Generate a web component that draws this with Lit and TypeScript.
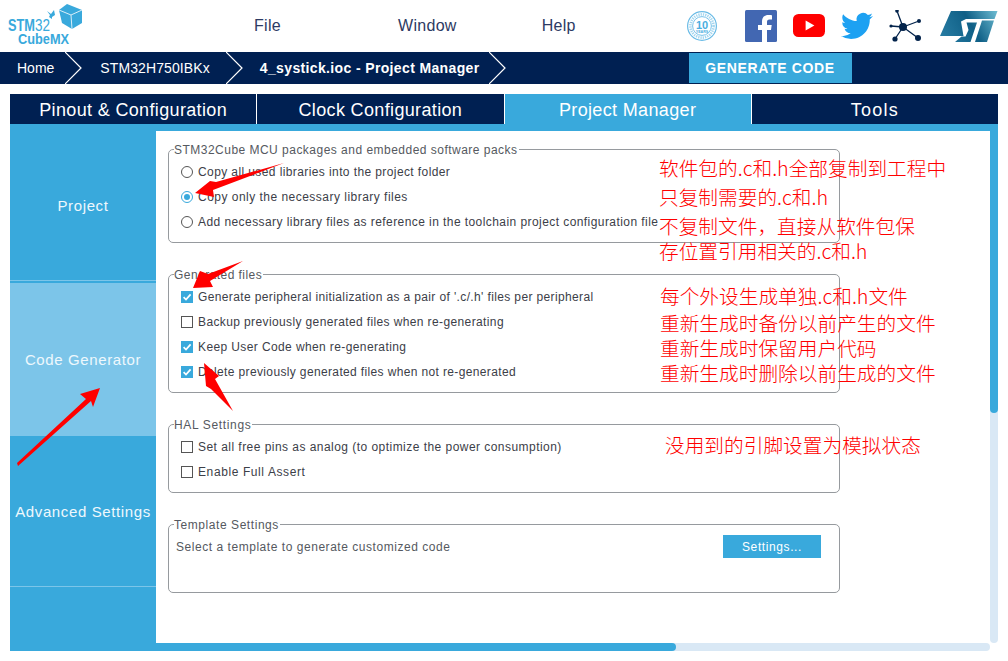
import { LitElement, html, css, svg } from "lit";
import { customElement } from "lit/decorators.js";

const notes: [string, number, number][] = [
  ["软件包的.c和.h全部复制到工程中", 659, 168],
  ["只复制需要的.c和.h", 659, 197],
  ["不复制文件\uFF0C直接从软件包保", 659, 226],
  ["存位置引用相关的.c和.h", 659, 251],
  ["每个外设生成单独.c和.h文件", 660, 296],
  ["重新生成时备份以前产生的文件", 660, 323],
  ["重新生成时保留用户代码", 660, 348],
  ["重新生成时删除以前生成的文件", 660, 373],
  ["没用到的引脚设置为模拟状态", 665, 445],
];

const check = svg`<svg class="tick" viewBox="0 0 12 12"><path d="M2.6 6.2 5 8.6 9.6 3.4" fill="none" stroke="#fff" stroke-width="1.7"/></svg>`;

@customElement("app-root")
export class AppRoot extends LitElement {
  static styles = css`
    :host {
      display: block;
      position: relative;
      width: 1008px;
      height: 661px;
      overflow: hidden;
      background: #fff;
      font-family: "Liberation Sans", Arial, sans-serif;
    }
    .top { display: flex; align-items: center; height: 52px; color: #2d3a63; font-size: 16px; }
    .logo { width: 90px; height: 52px; flex: none; display: block; }
    .menu { letter-spacing: .3px; }
    .file { margin-left: 164px; }
    .window { margin-left: 117px; }
    .help { margin-left: 85px; }
    .icons { display: flex; align-items: center; margin-left: 111px; }
    .icons svg { display: block; flex: none; }
    .crumbs { display: flex; height: 32px; background: #002052; color: #fff; font-size: 14px; position: relative; }
    .crumb { display: flex; align-items: center; flex: none; height: 32px; }
    .crumb svg { display: block; flex: none; }
    .home { margin-left: 17px; }
    .device { letter-spacing: .1px; }
    .bold { font-weight: 700; letter-spacing: .36px; }
    .gen {
      margin-left: 182px; margin-top: 1px; width: 163px; height: 30px; background: #39a9dc;
      display: flex; align-items: center; justify-content: center;
      font-weight: 700; font-size: 14px; letter-spacing: .65px;
    }
    .app { margin: 10px 10px 0; width: 988px; }
    .tabs { display: flex; gap: 1px; height: 30px; }
    .tab {
      flex: 1 1 0; background: #002052; color: #fff; font-size: 18px; letter-spacing: .35px; padding-top: 2px; box-sizing: border-box;
      display: flex; align-items: center; justify-content: center;
    }
    .tab.on { background: #39a9dc; }
    .tab.wide { letter-spacing: 1.2px; }
    .strip { height: 7px; background: #39a9dc; }
    .body { display: flex; height: 512px; }
    .side { width: 146px; flex: none; background: #39a9dc; color: #eef8fd; font-size: 15px; letter-spacing: .62px; }
    .item { display: flex; align-items: center; justify-content: center; white-space: nowrap; }
    .i1 { height: 149px; border-bottom: 1px solid #7cc5e9; }
    .i2 { height: 153px; margin-top: 2px; background: #7cc5e9; }
    .i3 { height: 150px; border-bottom: 1px solid #7cc5e9; }
    .main { flex: 1; padding: 11px 0 0 12px; color: #3c4048; font-size: 12px; letter-spacing: .4px; }
    .vbar { width: 8px; flex: none; margin-top: -7px; background: #d9e8f5; border-radius: 0 0 4px 4px; }
    .vthumb { height: 289px; background: #39a9dc; border-radius: 0 0 4px 4px; }
    .hbar { height: 8px; display: flex; }
    .hleft { width: 146px; background: #39a9dc; flex: none; }
    .htrack { width: 834px; background: #d9e8f5; border-radius: 0 4px 4px 0; }
    .hthumb { width: 520px; height: 8px; background: #39a9dc; border-radius: 0 4px 4px 0; }
    fieldset {
      box-sizing: border-box; width: 672px; margin: 0 0 24px; padding: 3px 0 0 12px;
      border: 1px solid #969a9e; border-radius: 5px; min-inline-size: 0;
    }
    legend { padding: 0 1px 0 0; margin-left: -7px; height: 14px; line-height: 16px; color: #555960; }
    .row { display: flex; align-items: center; height: 25px; gap: 5px; white-space: nowrap; }
    .lb { padding-top: 1px; }
    .g1 { height: 101px; }
    .g2 { height: 126px; }
    .g3 { height: 76px; }
    .g4 { height: 76px; padding-left: 7px; }
    .g4 legend { margin-left: -2px; }
    .box { box-sizing: border-box; width: 12px; height: 12px; flex: none; border: 1px solid #555; background: #fff; }
    .box.on { border: 0; background: #39a9dc; }
    .tick { display: block; width: 12px; height: 12px; }
    .radio { box-sizing: border-box; width: 12px; height: 12px; flex: none; border: 1px solid #555; border-radius: 50%; background: #fff; }
    .radio.on { border-color: #39a9dc; display: flex; align-items: center; justify-content: center; }
    .dot { width: 6px; height: 6px; border-radius: 50%; background: #39a9dc; }
    .tpl { display: flex; align-items: center; height: 23px; margin-top: 1px; color: #555960; }
    .tpl span { flex: none; width: 547px; letter-spacing: .54px; }
    .btn {
      width: 98px; height: 23px; background: #39a9dc; color: #fff; display: flex;
      align-items: center; justify-content: center; flex: none; letter-spacing: .6px;
    }
    .arrows { position: absolute; left: 0; top: 0; width: 1008px; height: 661px; pointer-events: none; }
    .note {
      position: absolute; transform: translateY(-50%); color: #ff0000; font-size: 19.7px; line-height: 24px;
      white-space: nowrap; font-family: "Noto Sans CJK SC", "Liberation Sans", sans-serif; font-weight: 300;
    }
  `;

  private box(on: boolean, label: string, ls: number) {
    return html`<div class="row"><div class="box ${on ? "on" : ""}">${on ? check : ""}</div><span class="lb" style="letter-spacing:${ls}px">${label}</span></div>`;
  }
  private radio(on: boolean, label: string, ls: number) {
    return html`<div class="row"><div class="radio ${on ? "on" : ""}">${on ? html`<div class="dot"></div>` : ""}</div><span class="lb" style="letter-spacing:${ls}px">${label}</span></div>`;
  }
  private legend(label: string, ls: number) {
    return html`<legend style="letter-spacing:${ls}px">${label}</legend>`;
  }
  private chevron() {
    return html`<svg width="18" height="32" viewBox="0 0 18 32"><path d="M0 0 16 16 0 32" fill="none" stroke="#fff" stroke-width="1.2"/></svg>`;
  }

  render() {
    return html`
      <div class="top">
        <svg class="logo" viewBox="0 0 90 52">
          <path d="M67 4 82 10V23L72 29 62 23 59 10Z" fill="#39a9dc"/>
          <path d="M59 10 71 15 82 10M71 15 72 29" fill="none" stroke="#d8eef9" stroke-width="1"/>
          <path d="M47 11 51 14 54 10 55 15 52 17 52 19 49 17 50 15Z" fill="#39a9dc"/>
          <text x="8" y="31" font-family="Liberation Sans" font-size="17" font-weight="700" fill="#39a9dc" textLength="27" lengthAdjust="spacingAndGlyphs">STM</text>
          <text x="35" y="31" font-family="Liberation Sans" font-size="17" fill="#39a9dc" textLength="15" lengthAdjust="spacingAndGlyphs">32</text>
          <text x="18" y="43.5" font-family="Liberation Sans" font-size="15.5" font-weight="700" fill="#39a9dc" textLength="51" lengthAdjust="spacingAndGlyphs">CubeMX</text>
        </svg>
        <span class="menu file">File</span>
        <span class="menu window">Window</span>
        <span class="menu help">Help</span>
        <div class="icons">
          <svg width="30" height="32" viewBox="0 0 30 32">
            <circle cx="15" cy="16" r="14.4" fill="none" stroke="#6abbe6" stroke-width="1.2"/>
            <circle cx="15" cy="16" r="11.6" fill="none" stroke="#a5d6ef" stroke-width="2.6" stroke-dasharray="1.3 1"/>
            <circle cx="15" cy="16" r="9.4" fill="none" stroke="#6abbe6" stroke-width=".9"/>
            <text x="15" y="18.5" text-anchor="middle" font-family="Liberation Sans" font-size="11" font-weight="700" fill="#4aaee0">10</text>
            <text x="15" y="22.5" text-anchor="middle" font-family="Liberation Sans" font-size="3.6" font-weight="700" fill="#4aaee0">YEARS</text>
          </svg>
          <svg style="margin-left:28px" width="32" height="32" viewBox="0 0 32 32">
            <rect width="32" height="32" rx="1.5" fill="#4267b2"/>
            <path d="M22 32V20h4l.7-5H22v-3c0-1.4.5-2.4 2.5-2.4H27V5.2C26.5 5.1 25 5 23.3 5 19.7 5 17 7.2 17 11.4V15h-4v5h4v12z" fill="#fff"/>
          </svg>
          <svg style="margin-left:16px" width="32" height="32" viewBox="0 0 32 32">
            <rect x="0" y="4" width="32" height="23" rx="5.5" fill="#ff0000"/>
            <path d="M12.6 10.6 21.4 15.5 12.6 20.4Z" fill="#fff"/>
          </svg>
          <svg style="margin-left:16px" width="32" height="32" viewBox="0 0 24 24">
            <path d="M23.953 4.57a10 10 0 01-2.825.775 4.958 4.958 0 002.163-2.723c-.951.555-2.005.959-3.127 1.184a4.92 4.92 0 00-8.384 4.482C7.69 8.095 4.067 6.13 1.64 3.162a4.822 4.822 0 00-.666 2.475c0 1.71.87 3.213 2.188 4.096a4.904 4.904 0 01-2.228-.616v.06a4.923 4.923 0 003.946 4.827 4.996 4.996 0 01-2.212.085 4.936 4.936 0 004.604 3.417 9.867 9.867 0 01-6.102 2.105c-.39 0-.779-.023-1.17-.067a13.995 13.995 0 007.557 2.209c9.053 0 13.998-7.496 13.998-13.985 0-.21 0-.42-.015-.63A9.935 9.935 0 0024 4.59z" fill="#1da1f2"/>
          </svg>
          <svg style="margin-left:16px" width="32" height="32" viewBox="889 10 32 32">
            <g stroke="#03234b" stroke-width="1.3">
              <path d="M903 27 897 11M903 27 919 21M903 27 918 38M903 27 895 39M903 27 891 26"/>
            </g>
            <g fill="#03234b">
              <circle cx="903" cy="27" r="4"/><circle cx="897" cy="11" r="1.8"/><circle cx="919" cy="21" r="2"/>
              <circle cx="918" cy="38" r="3"/><circle cx="895" cy="39" r="2.6"/><circle cx="891" cy="26" r="1.6"/>
            </g>
          </svg>
          <svg style="margin-left:19px" width="58" height="32" viewBox="940 10 58 32">
            <defs>
              <linearGradient id="st" gradientUnits="userSpaceOnUse" x1="940" y1="42" x2="997" y2="11">
                <stop offset="0" stop-color="#2a7fa6"/><stop offset=".55" stop-color="#0f5f86"/><stop offset="1" stop-color="#6dbcd2"/>
              </linearGradient>
            </defs>
            <path fill="url(#st)" d="M951 11H997.500L994.500 19H966L961 21.500 963.500 36H940Z"/>
            <path fill="url(#st)" d="M966.500 22.500H977L970.500 42H955L961.500 36.500H965.500L968.500 30Z"/>
            <path fill="url(#st)" d="M982 20.500H994L987 42H975Z"/>
          </svg>
        </div>
      </div>

      <div class="crumbs">
        <div class="crumb home">Home</div>
        <div class="crumb" style="margin-left:11px">${this.chevron()}</div>
        <div class="crumb device" style="margin-left:17px">STM32H750IBKx</div>
        <div class="crumb" style="margin-left:16px">${this.chevron()}</div>
        <div class="crumb bold" style="margin-left:16px">4_systick.ioc - Project Manager</div>
        <div class="crumb" style="margin-left:9px">${this.chevron()}</div>
        <div class="gen">GENERATE CODE</div>
      </div>

      <div class="app">
        <div class="tabs">
          <div class="tab">Pinout &amp; Configuration</div>
          <div class="tab">Clock Configuration</div>
          <div class="tab on">Project Manager</div>
          <div class="tab wide">Tools</div>
        </div>
        <div class="strip"></div>
        <div class="body">
          <div class="side">
            <div class="item i1">Project</div>
            <div class="item i2">Code Generator</div>
            <div class="item i3">Advanced Settings</div>
          </div>
          <div class="main">
            <fieldset class="g1">
              ${this.legend("STM32Cube MCU packages and embedded software packs", 0.48)}
              ${this.radio(false, "Copy all used libraries into the project folder", 0.4)}
              ${this.radio(true, "Copy only the necessary library files", 0.48)}
              ${this.radio(false, "Add necessary library files as reference in the toolchain project configuration file", 0.43)}
            </fieldset>
            <fieldset class="g2">
              ${this.legend("Generated files", 0.45)}
              ${this.box(true, "Generate peripheral initialization as a pair of '.c/.h' files per peripheral", 0.37)}
              ${this.box(false, "Backup previously generated files when re-generating", 0.38)}
              ${this.box(true, "Keep User Code when re-generating", 0.39)}
              ${this.box(true, "Delete previously generated files when not re-generated", 0.36)}
            </fieldset>
            <fieldset class="g3">
              ${this.legend("HAL Settings", 0.65)}
              ${this.box(false, "Set all free pins as analog (to optimize the power consumption)", 0.46)}
              ${this.box(false, "Enable Full Assert", 0.6)}
            </fieldset>
            <fieldset class="g4">
              ${this.legend("Template Settings", 0.56)}
              <div class="tpl"><span>Select a template to generate customized code</span><div class="btn">Settings...</div></div>
            </fieldset>
          </div>
          <div class="vbar"><div class="vthumb"></div></div>
        </div>
        <div class="hbar"><div class="hleft"></div><div class="htrack"><div class="hthumb"></div></div></div>
      </div>

      <svg class="arrows" viewBox="0 0 1008 661">
        <g fill="#ff0000">
          <path d="M284 163 216 182 210 181 195 193 214 197 213 190Z"/>
          <path d="M243 261 208 274 200 271 193 288 213 287 210 281Z"/>
          <path d="M204 363 219 376 215 379 233 411 211 389 206 386Z"/>
          <path d="M100 388 93 407 91 401 18 466 17 463 86 399 80 394Z"/>
        </g>
      </svg>
      ${notes.map(([t, x, y]) => html`<div class="note" style="left:${x}px;top:${y}px">${t}</div>`)}
    `;
  }
}
